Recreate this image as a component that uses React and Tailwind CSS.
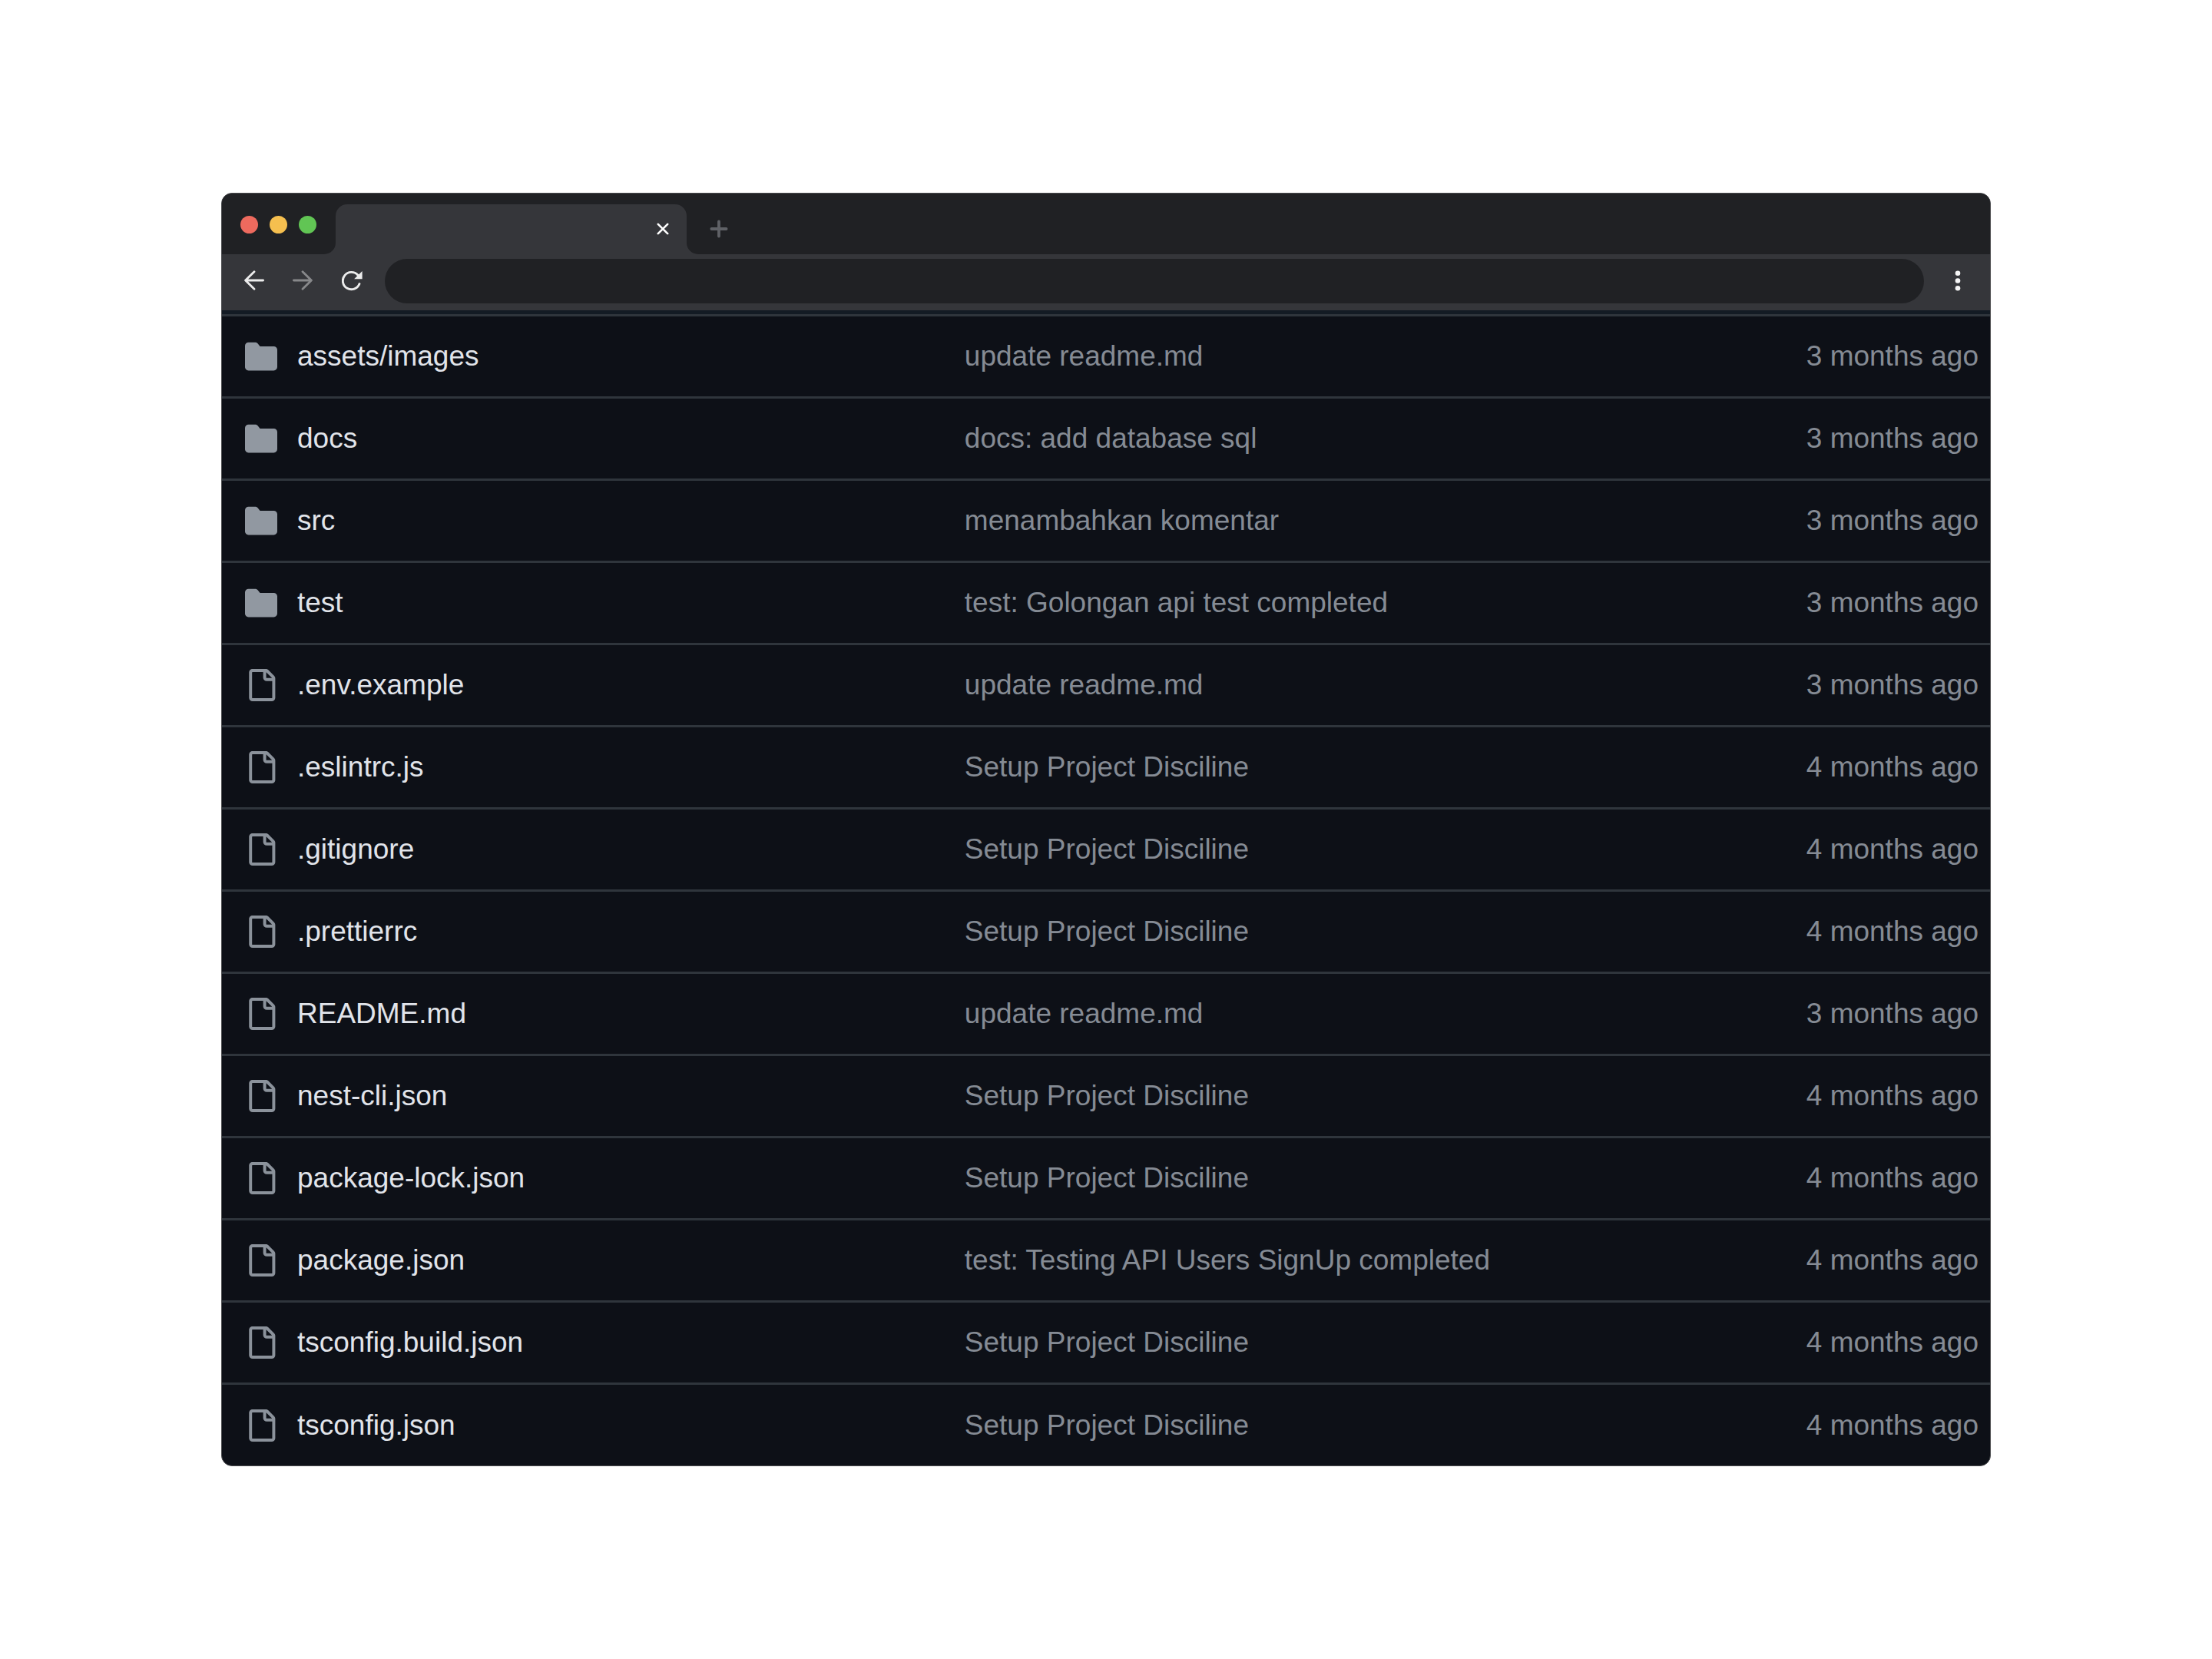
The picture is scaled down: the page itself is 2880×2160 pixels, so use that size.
import React from "react";

const entries = [
  ["folder", "assets/images", "update readme.md", "3 months ago"],
  ["folder", "docs", "docs: add database sql", "3 months ago"],
  ["folder", "src", "menambahkan komentar", "3 months ago"],
  ["folder", "test", "test: Golongan api test completed", "3 months ago"],
  ["file", ".env.example", "update readme.md", "3 months ago"],
  ["file", ".eslintrc.js", "Setup Project Disciline", "4 months ago"],
  ["file", ".gitignore", "Setup Project Disciline", "4 months ago"],
  ["file", ".prettierrc", "Setup Project Disciline", "4 months ago"],
  ["file", "README.md", "update readme.md", "3 months ago"],
  ["file", "nest-cli.json", "Setup Project Disciline", "4 months ago"],
  ["file", "package-lock.json", "Setup Project Disciline", "4 months ago"],
  ["file", "package.json", "test: Testing API Users SignUp completed", "4 months ago"],
  ["file", "tsconfig.build.json", "Setup Project Disciline", "4 months ago"],
  ["file", "tsconfig.json", "Setup Project Disciline", "4 months ago"],
];

function EntryIcon({ kind }) {
  return (
    <svg viewBox="0 0 16 16" className="size-[42px] shrink-0 fill-[#9198a1]" aria-hidden="true">
      {kind === "folder" ? (
        <path d="M1.75 1A1.75 1.75 0 0 0 0 2.75v10.5C0 14.216.784 15 1.75 15h12.5A1.75 1.75 0 0 0 16 13.25v-8.5A1.75 1.75 0 0 0 14.25 3H7.5a.25.25 0 0 1-.2-.1l-.9-1.2C6.07 1.26 5.55 1 5 1H1.75Z" />
      ) : (
        <path
          className="fill-[#8b929b]"
          d="M2 1.75C2 .784 2.784 0 3.75 0h6.586c.464 0 .909.184 1.237.513l2.914 2.914c.329.328.513.773.513 1.237v9.586A1.75 1.75 0 0 1 13.25 16h-9.5A1.75 1.75 0 0 1 2 14.25Zm1.75-.25a.25.25 0 0 0-.25.25v12.5c0 .138.112.25.25.25h9.5a.25.25 0 0 0 .25-.25V6h-2.75A1.75 1.75 0 0 1 9 4.25V1.5Zm6.75.062V4.25c0 .138.112.25.25.25h2.688l-.011-.013-2.914-2.914-.013-.011Z"
        />
      )}
    </svg>
  );
}

function TabStrip() {
  return (
    <div className="flex h-[79px] bg-[#35363a]">
      <div className="flex w-[148px] items-center gap-[15px] rounded-br-[15px] bg-[#202124] pt-[3px] pl-6">
        <button aria-label="Close window" className="size-[23px] rounded-full bg-[#ed6a5e]" />
        <button aria-label="Minimize window" className="size-[23px] rounded-full bg-[#f5bf4f]" />
        <button aria-label="Maximize window" className="size-[23px] rounded-full bg-[#61c554]" />
      </div>
      <div className="w-[457px] bg-[#202124] pt-[14px]">
        <div className="flex h-full items-center justify-end rounded-t-[15px] bg-[#35363a] pr-[23px]">
          <button aria-label="Close tab">
            <svg viewBox="0 0 16 16" className="size-4" fill="none" stroke="#fff" strokeWidth="2.6" strokeLinecap="round">
              <path d="M1.8 1.8l12.4 12.4M14.2 1.8L1.8 14.2" />
            </svg>
          </button>
        </div>
      </div>
      <div className="flex flex-1 items-center rounded-bl-[15px] bg-[#202124] pt-[14px] pl-[30px]">
        <button aria-label="New tab">
          <svg viewBox="0 0 24 24" className="size-6" fill="none" stroke="#5f6166" strokeWidth="3.8" strokeLinecap="round">
            <path d="M12 2.4v19.2M2.4 12h19.2" />
          </svg>
        </button>
      </div>
    </div>
  );
}

function Toolbar() {
  return (
    <div className="flex h-[73px] items-center bg-[#35363a] pr-[37px] pb-0.5 pl-7">
      <button aria-label="Back">
        <svg viewBox="0 0 28 28" className="size-7" fill="none" stroke="#ececec" strokeWidth="2.8" strokeLinecap="round" strokeLinejoin="round">
          <path d="M25.6 13H3M14 1.8L2.6 13L14 24.2" />
        </svg>
      </button>
      <button aria-label="Forward" className="ml-9">
        <svg viewBox="0 0 28 28" className="size-7" fill="none" stroke="#87888a" strokeWidth="2.8" strokeLinecap="round" strokeLinejoin="round">
          <path d="M1.4 13H24M13 1.8L24.4 13L13 24.2" />
        </svg>
      </button>
      <button aria-label="Reload" className="ml-9">
        <svg viewBox="0 0 28 28" className="size-7" fill="none">
          <path d="M23 17.6A11.2 11.2 0 1 1 20.8 6" stroke="#ececec" strokeWidth="2.9" strokeLinecap="round" />
          <path d="M26.6 1v10.3H16.1z" fill="#ececec" />
        </svg>
      </button>
      <input aria-label="Address" className="ml-7 h-[58px] min-w-0 flex-1 rounded-full bg-[#202124] px-8 text-[28px] text-white outline-none" />
      <button aria-label="Menu" className="ml-[39px]">
        <svg viewBox="0 0 10 28" className="h-7 w-[10px] fill-[#f5f5f5]">
          <circle cx="5" cy="3.8" r="3.3" />
          <circle cx="5" cy="13.5" r="3.3" />
          <circle cx="5" cy="23.3" r="3.3" />
        </svg>
      </button>
    </div>
  );
}

export default function App() {
  return (
    <main className="flex min-h-screen items-center justify-center bg-white font-['Liberation_Sans',Arial,sans-serif]">
      <section className="w-4/5 overflow-hidden rounded-[14px] border border-[#4a4b4e] bg-[#0d1017]">
        <TabStrip />
        <Toolbar />
        <div className="h-[5px] bg-[#131b24]" />
        <table className="w-full table-fixed border-collapse text-left text-[37px] leading-[44px]">
          <colgroup>
            <col className="w-[42%]" />
            <col />
            <col className="w-[16%]" />
          </colgroup>
          <tbody>
            {entries.map(([kind, name, message, age]) => (
              <tr key={name} className="h-[107px] border-t-3 border-[#2f353c]">
                <th scope="row" className="p-0 pl-[30px] font-normal">
                  <span className="flex items-center gap-[26px]">
                    <EntryIcon kind={kind} />
                    <a href="#" className="text-[#e1e4ea]">{name}</a>
                  </span>
                </th>
                <td className="p-0">
                  <a href="#" className="text-[#858b94]">{message}</a>
                </td>
                <td className="p-0 pr-[15px] text-right whitespace-nowrap text-[#858b94]">{age}</td>
              </tr>
            ))}
          </tbody>
        </table>
      </section>
    </main>
  );
}
